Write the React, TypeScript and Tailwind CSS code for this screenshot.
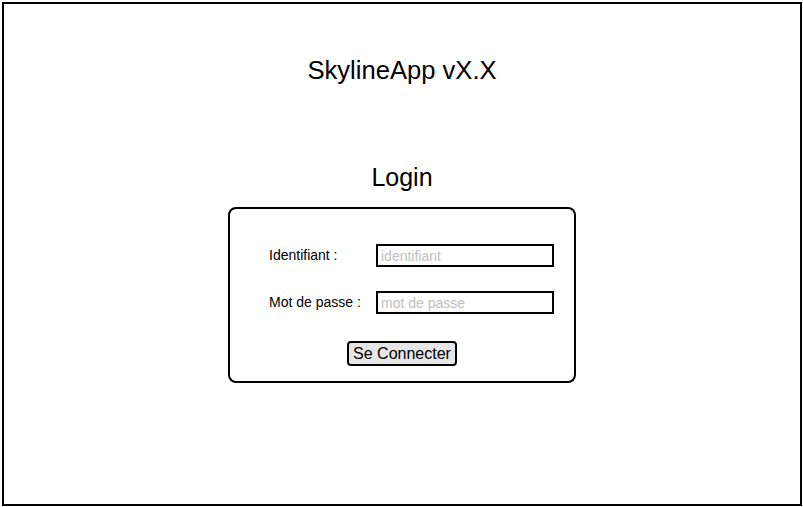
import React from 'react';

export default function App() {
    return (
        <div className="w-[803px] h-[507px] bg-white p-[2px] font-['Liberation_Sans',Arial,sans-serif] text-black">
            <div className="w-[800px] h-[504px] border-2 border-black flex flex-col items-center pt-[52px]">
                {/* Header */}
                <h1 className="text-[25.6px] leading-[28px]">SkylineApp vX.X</h1>

                <h2 className="mt-[79px] text-[25px] leading-[28px]">Login</h2>

                {/* Login card */}
                <form className="mt-[16px] w-[348px] h-[176px] border-2 border-black rounded-[8px] flex flex-col items-center pt-[35px]">
                    <div className="w-full flex items-center pl-[39px] h-[23px]">
                        <label className="w-[107px] text-[14px]">Identifiant :</label>
                        <input
                            type="text"
                            placeholder="identifiant"
                            className="w-[178px] h-[23px] border-2 border-black px-[3px] text-[14px] placeholder:text-[#c0c0c0] outline-none"
                        />
                    </div>
                    <div className="w-full flex items-center pl-[39px] h-[23px] mt-[24px]">
                        <label className="w-[107px] text-[14px]">Mot de passe :</label>
                        <input
                            type="password"
                            placeholder="mot de passe"
                            className="w-[178px] h-[23px] border-2 border-black px-[3px] text-[14px] placeholder:text-[#c0c0c0] outline-none"
                        />
                    </div>
                    <button
                        type="button"
                        className="mt-[27px] w-[110px] h-[25px] bg-[#e6e6e6] border-2 border-black rounded-[4px] text-[16px] leading-none"
                    >
                        Se Connecter
                    </button>
                </form>
            </div>
        </div>
    );
}
